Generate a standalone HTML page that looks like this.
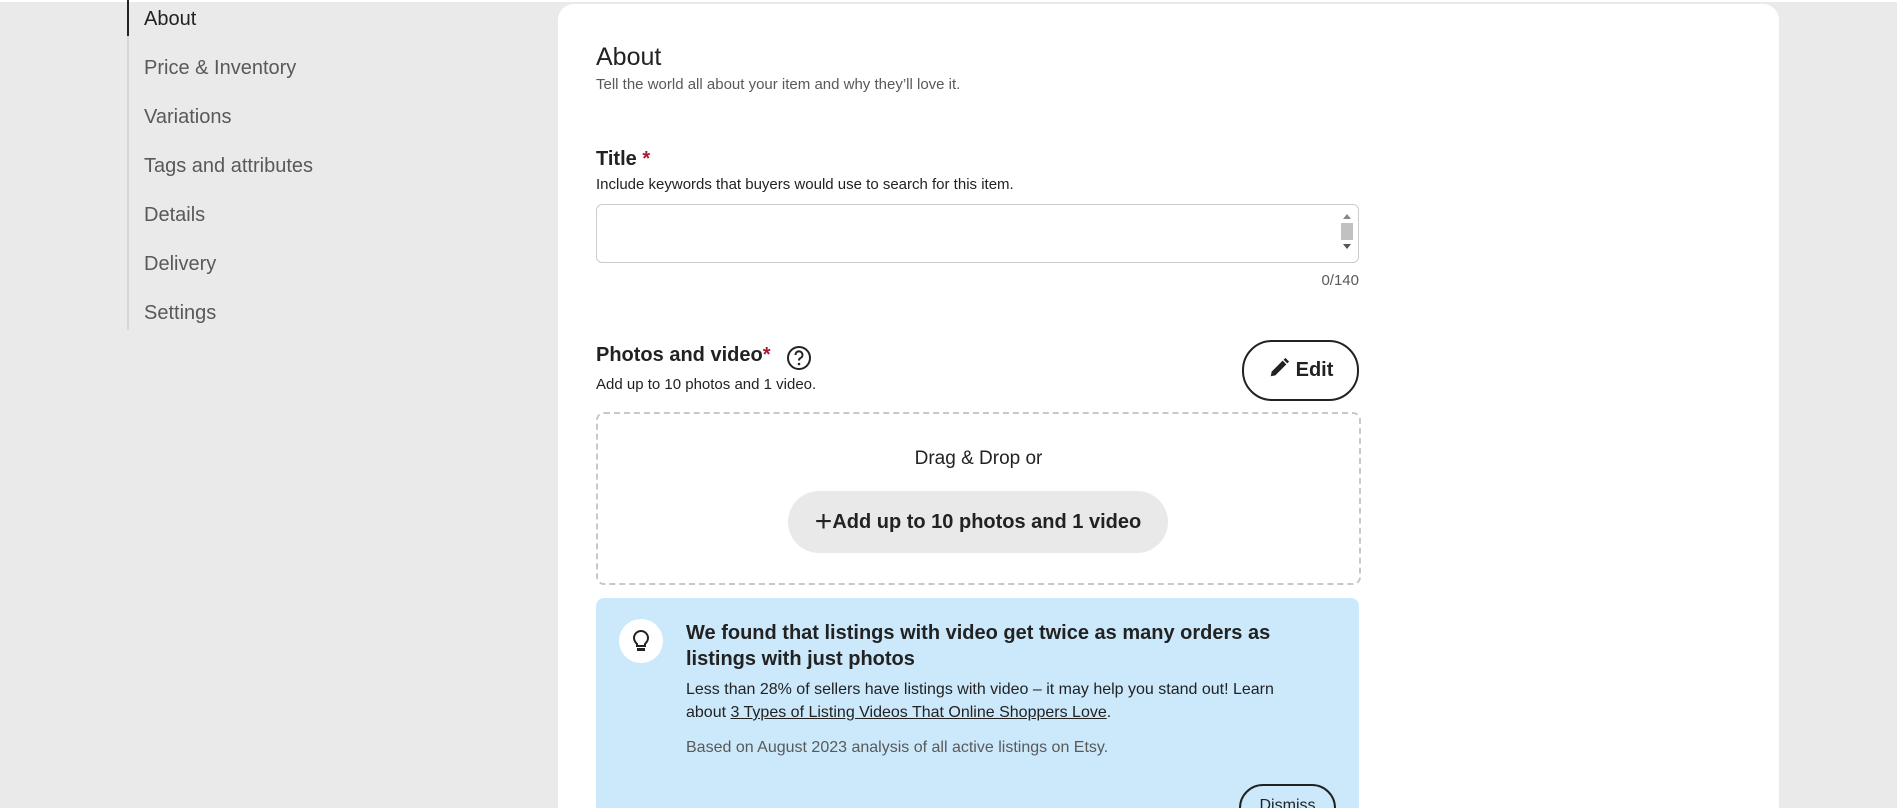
<!DOCTYPE html>
<html style="height:808px;overflow:hidden"><head><style>
body{margin:0;width:1897px;height:808px;overflow:hidden;background:#eaeaea;font-family:"Liberation Sans",sans-serif;color:#222;position:relative}
.a{position:absolute;white-space:nowrap}
.nav{left:144px;font-size:20px;color:#595959}
.card{position:absolute;left:558px;top:4px;width:1221px;height:804px;background:#fff;border-radius:16px 16px 0 0}
</style></head><body>
<div class="a" style="left:0;top:0;width:1897px;height:2px;background:#fff"></div>
<div class="a" style="left:127px;top:0;width:2px;height:330px;background:#d6d6d6"></div>
<div class="a" style="left:127px;top:0;width:2px;height:36px;background:#222"></div>
<div class="a nav" style="top:8px;color:#222">About</div>
<div class="a nav" style="top:57px">Price &amp; Inventory</div>
<div class="a nav" style="top:106px">Variations</div>
<div class="a nav" style="top:155px">Tags and attributes</div>
<div class="a nav" style="top:204px">Details</div>
<div class="a nav" style="top:253px">Delivery</div>
<div class="a nav" style="top:302px">Settings</div>
<div class="card"></div>
<div class="a" style="left:596px;top:43px;font-size:25px">About</div>
<div class="a" style="left:596px;top:76px;font-size:15px;color:#595959">Tell the world all about your item and why they’ll love it.</div>
<div class="a" style="left:596px;top:148px;font-size:20px;font-weight:bold">Title<span style="color:#a61a2e"> *</span></div>
<div class="a" style="left:596px;top:176px;font-size:15px">Include keywords that buyers would use to search for this item.</div>
<div class="a" style="left:596px;top:204px;width:761px;height:57px;border:1px solid #ccc;border-radius:6px"></div>
<div class="a" style="left:1340px;top:210px;width:14px;height:46px"><div style="width:0;height:0;border:4px solid transparent;border-bottom:5px solid #888;margin:0 auto"></div><div style="width:12px;height:17px;background:#c1c1c1;margin:4px auto"></div><div style="width:0;height:0;border:4px solid transparent;border-top:5px solid #555;margin:0 auto"></div></div>
<div class="a" style="left:1300px;top:272px;width:59px;text-align:right;font-size:15px;color:#595959">0/140</div>
<div class="a" style="left:596px;top:344px;font-size:20px;font-weight:bold">Photos and video<span style="color:#a61a2e">*</span></div>
<svg class="a" style="left:786px;top:345px" width="26" height="26" viewBox="0 0 26 26"><circle cx="13" cy="13" r="11" fill="none" stroke="#222" stroke-width="2"/><path d="M9.5 10a3.5 3.5 0 1 1 5 3c-1.3.7-1.5 1.3-1.5 2.5" fill="none" stroke="#222" stroke-width="2"/><circle cx="13" cy="19" r="1.3" fill="#222"/></svg>
<div class="a" style="left:596px;top:376px;font-size:15px">Add up to 10 photos and 1 video.</div>
<div class="a" style="left:1242px;top:340px;width:113px;height:57px;border:2px solid #222;border-radius:30px;font-size:20px;font-weight:bold;line-height:57px;text-align:center"><svg width="22" height="22" viewBox="0 0 24 24" style="vertical-align:-3px;margin-right:6px"><path d="M3 21l1-5L16 4l4 4L8 20z M17 3l2-2 4 4-2 2z" fill="#222"/></svg>Edit</div>
<div class="a" style="left:596px;top:412px;width:761px;height:169px;border:2px dashed #c8c8c8;border-radius:8px"></div>
<div class="a" style="left:596px;top:448px;width:765px;text-align:center;font-size:19px">Drag &amp; Drop or</div>
<div class="a" style="left:788px;top:491px;width:380px;height:62px;background:#e9e9e9;border-radius:31px;text-align:center;line-height:62px;font-size:20px;font-weight:bold"><span style="font-weight:normal;font-size:30px;vertical-align:-3px">+</span>Add up to 10 photos and 1 video</div>
<div class="a" style="left:596px;top:598px;width:763px;height:210px;background:#cce9fc;border-radius:8px 8px 0 0"></div>
<div class="a" style="left:619px;top:619px;width:44px;height:44px;border-radius:50%;background:#fff"></div>
<svg class="a" style="left:629px;top:628px" width="24" height="26" viewBox="0 0 24 26"><path d="M8 16c-2-2-3-3.5-3-6a7 7 0 0 1 14 0c0 2.5-1 4-3 6v2H8z" fill="none" stroke="#222" stroke-width="2"/><rect x="8" y="20" width="8" height="3" fill="#222"/></svg>
<div class="a" style="left:686px;top:620px;font-size:20px;font-weight:bold;line-height:26px">We found that listings with video get twice as many orders as<br>listings with just photos</div>
<div class="a" style="left:686px;top:678px;font-size:16px;line-height:23px">Less than 28% of sellers have listings with video – it may help you stand out! Learn<br>about <u>3 Types of Listing Videos That Online Shoppers Love</u>.</div>
<div class="a" style="left:686px;top:739px;font-size:16px;color:#595959">Based on August 2023 analysis of all active listings on Etsy.</div>
<div class="a" style="left:1239px;top:784px;width:93px;height:44px;border:2px solid #222;border-radius:24px;text-align:center;font-size:16px;line-height:40px">Dismiss</div>
</body></html>
